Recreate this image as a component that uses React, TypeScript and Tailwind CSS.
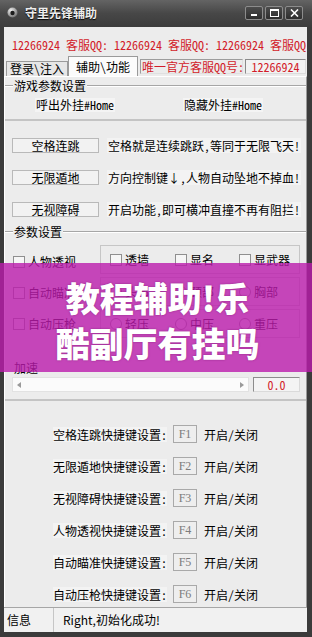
import React from "react"

function GroupHeader({ title }: { title: string }) {
  return (
    <div className="flex items-center h-[12px]">
      <div className="w-[8px] h-[2px] border-t border-[#a6a6a6] border-b border-b-white" />
      <span className="px-[1px] leading-[12px]">{title}</span>
      <div className="flex-1 h-[2px] border-t border-[#a6a6a6] border-b border-b-white" />
    </div>
  )
}

function Check({ label }: { label: string }) {
  return (
    <div className="flex items-center gap-[3px]">
      <span className="w-[12px] h-[12px] border border-[#8f8f8f] bg-[#f6f6f6]" />
      <span className="leading-[14px]">{label}</span>
    </div>
  )
}

function Radio({ label }: { label: string }) {
  return (
    <div className="flex items-center gap-[3px]">
      <span className="w-[12px] h-[12px] rounded-full border border-[#8f8f8f] bg-[#f6f6f6]" />
      <span className="leading-[14px]">{label}</span>
    </div>
  )
}

function FuncRow({ name, desc }: { name: string; desc: string }) {
  return (
    <div className="flex items-center h-[15px]">
      <div className="w-[87px] h-[15px] border border-[#b9b9b9] bg-[#f2f2f2] flex items-center justify-center leading-[13px]">
        {name}
      </div>
      <span className="ml-[8px] px-[1px] bg-[#f3f3f3] leading-[15px] whitespace-nowrap">{desc}</span>
    </div>
  )
}

function HotkeyRow({ name, k }: { name: string; k: string }) {
  return (
    <div className="flex items-center justify-center h-[18px]">
      <span className="w-[114px] whitespace-nowrap bg-[#f3f3f3] leading-[15px]">{name}快捷键设置:</span>
      <div className="ml-[6px] w-[24px] h-[18px] border border-[#a9a9a9] bg-[#eeeeee] flex items-center justify-center text-[#7c7c7c] font-['Liberation_Serif',serif] text-[12px]">
        {k}
      </div>
      <span className="ml-[7px] leading-[15px]">开启/关闭</span>
    </div>
  )
}

export default function App() {
  return (
    <div className="relative w-[312px] h-[637px] bg-[#3b3b3b] flex flex-col overflow-hidden text-[12px] text-black font-['Noto_Sans_Mono_CJK_SC','Noto_Sans_CJK_SC',sans-serif]">
      {/* Title bar */}
      <div className="h-[27px] shrink-0 flex items-start bg-linear-to-b from-[#646464] via-[#474747] to-[#3c3c3c]">
        <svg className="ml-[7px] mt-[7px]" width="11" height="11" viewBox="0 0 11 11">
          <defs>
            <radialGradient id="ball" cx="0.35" cy="0.3" r="0.8">
              <stop offset="0" stopColor="#f0f0f0" />
              <stop offset="1" stopColor="#6a6a6a" />
            </radialGradient>
          </defs>
          <circle cx="5.5" cy="5.5" r="5" fill="url(#ball)" />
          <circle cx="5.5" cy="6" r="2.2" fill="#1c1c1c" />
        </svg>
        <span className="ml-[7px] mt-[6px] text-[12px] leading-[14px] font-bold text-[#ededed] [text-shadow:0_1px_1px_#000] font-['Noto_Sans_CJK_SC',sans-serif]">
          守里先锋辅助
        </span>
        <div className="ml-auto mr-[9px] mt-[6px] flex gap-[2px]">
          <div className="w-[18px] h-[14px] border border-[#8c8c8c] rounded-[2px] bg-linear-to-b from-[#4c4c4c] to-[#2e2e2e] flex items-end justify-center pb-[3px]">
            <div className="w-[6px] h-[2px] bg-white" />
          </div>
          <div className="w-[18px] h-[14px] border border-[#8c8c8c] rounded-[2px] bg-linear-to-b from-[#4c4c4c] to-[#2e2e2e] flex items-center justify-center">
            <div className="w-[9px] h-[8px] border border-white border-t-2" />
          </div>
          <div className="w-[18px] h-[14px] border border-[#8c8c8c] rounded-[2px] bg-linear-to-b from-[#4c4c4c] to-[#2e2e2e] flex items-center justify-center">
            <svg width="9" height="8" viewBox="0 0 9 8">
              <path d="M1 0.5 L8 7.5 M8 0.5 L1 7.5" stroke="#fff" strokeWidth="1.6" />
            </svg>
          </div>
        </div>
      </div>

      {/* Client area */}
      <div className="flex-1 ml-[4px] mr-[5px] mb-[5px] bg-[#ececec] flex flex-col">
        {/* Marquee */}
        <div className="h-[29px] shrink-0 pt-[10px] pl-[8px] overflow-hidden whitespace-nowrap text-[#d21c2a] leading-[16px]">
          12266924 客服QQ: 12266924 客服QQ: 12266924 客服QQ
        </div>

        {/* Tabs row */}
        <div className="h-[20px] shrink-0 flex items-end">
          <div className="ml-[2px] w-[62px] h-[15px] border border-b-0 border-[#9a9a9a] bg-[#e6e6e6] flex items-center justify-center leading-[14px]">
            登录\注入
          </div>
          <div className="w-[70px] h-[20px] border border-b-0 border-[#9a9a9a] bg-[#fbfbfb] flex items-center justify-center leading-[14px]">
            辅助\功能
          </div>
          <div className="self-start mt-[3px] ml-[2px] w-[103px] h-[15px] border border-[#9c9c9c] border-r-[#e0e0e0] border-b-[#e0e0e0] flex items-center pl-[1px] text-[#d21c2a] leading-[14px] whitespace-nowrap">
            唯一官方客服QQ号:
          </div>
          <div className="self-start mt-[3px] ml-[2px] w-[61px] h-[15px] border border-[#8a8a8a] border-r-[#dcdcdc] border-b-[#dcdcdc] bg-[#f2f2f2] flex items-center justify-center text-[#d21c2a] leading-[14px]">
            12266924
          </div>
        </div>

        {/* Tab panel */}
        <div className="flex-1 flex flex-col border-t border-l border-white border-r border-r-[#9a9a9a]">
          {/* 游戏参数设置 */}
          <div className="h-[44px] shrink-0 pt-[3px] flex flex-col border-b-2 border-b-[#c4c4c4]">
            <GroupHeader title="游戏参数设置" />
            <div className="mt-[6px] flex h-[14px] leading-[14px]">
              <span className="ml-[30px] px-[1px] bg-[#f4f4f4]">呼出外挂#Home</span>
              <span className="ml-[68px] px-[1px] bg-[#f4f4f4]">隐藏外挂#Home</span>
            </div>
          </div>

          {/* Function buttons */}
          <div className="h-[105px] shrink-0 pt-[17px] pl-[7px] flex flex-col gap-[17px]">
            <FuncRow name="空格连跳" desc="空格就是连续跳跃,等同于无限飞天!" />
            <FuncRow name="无限遁地" desc="方向控制键↓,人物自动坠地不掉血!" />
            <FuncRow name="无视障碍" desc="开启功能,即可横冲直撞不再有阻拦!" />
          </div>

          {/* 参数设置 */}
          <div className="h-[175px] shrink-0 flex flex-col border-b-2 border-b-[#c4c4c4]">
            <GroupHeader title="参数设置" />
            <div className="mt-[7px] flex flex-col gap-[3px]">
              <div className="flex items-center h-[29px]">
                <div className="w-[95px] pl-[8px] pt-[4px]">
                  <Check label="人物透视" />
                </div>
                <div className="w-[200px] h-[29px] border border-[#c6c6c6] flex items-center pl-[9px]">
                  <div className="w-[65px]"><Check label="透墙" /></div>
                  <div className="w-[64px]"><Check label="显名" /></div>
                  <div><Check label="显武器" /></div>
                </div>
              </div>
              <div className="flex items-center h-[29px]">
                <div className="w-[95px] pl-[8px] pt-[2px]">
                  <Check label="自动瞄准" />
                </div>
                <div className="w-[200px] h-[29px] border border-[#c6c6c6] flex items-center pl-[9px]">
                  <div className="w-[65px]"><Radio label="头部" /></div>
                  <div className="w-[64px]"><Radio label="颈部" /></div>
                  <div><Radio label="胸部" /></div>
                </div>
              </div>
              <div className="flex items-center h-[29px]">
                <div className="w-[95px] pl-[8px]">
                  <Check label="自动压枪" />
                </div>
                <div className="w-[200px] h-[29px] border border-[#c6c6c6] flex items-center pl-[9px]">
                  <div className="w-[65px]"><Radio label="轻压" /></div>
                  <div className="w-[64px]"><Radio label="中压" /></div>
                  <div><Radio label="重压" /></div>
                </div>
              </div>
            </div>
            <div className="mt-[24px] pl-[9px] h-[12px] leading-[12px]">加速</div>
            <div className="mt-[3px] flex items-center h-[15px]">
              <div className="ml-[7px] w-[237px] h-[15px] bg-[#fbfbfb] border border-[#e2e2e2] flex items-center justify-between px-[4px]">
                <svg width="4" height="6" viewBox="0 0 4 6"><path d="M4 0 L0 3 L4 6 Z" fill="#9a9a9a" /></svg>
                <svg width="4" height="6" viewBox="0 0 4 6"><path d="M0 0 L4 3 L0 6 Z" fill="#9a9a9a" /></svg>
              </div>
              <div className="ml-[4px] w-[47px] h-[15px] border border-[#8c8c8c] border-r-[#dadada] border-b-[#dadada] bg-[#f4f4f4] flex items-center justify-center text-[#d21c2a] leading-[13px]">
                0.0
              </div>
            </div>
          </div>

          {/* Hotkeys */}
          <div className="flex-1 pt-[24px] flex flex-col gap-[14px]">
            <HotkeyRow name="空格连跳" k="F1" />
            <HotkeyRow name="无限遁地" k="F2" />
            <HotkeyRow name="无视障碍" k="F3" />
            <HotkeyRow name="人物透视" k="F4" />
            <HotkeyRow name="自动瞄准" k="F5" />
            <HotkeyRow name="自动压枪" k="F6" />
          </div>
        </div>

        {/* Status bar */}
        <div className="h-[25px] shrink-0 flex items-stretch border-t border-[#a6a6a6] bg-[#f1f1f1]">
          <span className="w-[49px] pl-[3px] flex items-center">信息</span>
          <div className="w-[1px] bg-[#c6c6c6]" />
          <span className="pl-[9px] flex items-center font-['Noto_Sans_CJK_SC',sans-serif]">Right,初始化成功!</span>
        </div>
      </div>

      {/* Promo overlay */}
      <div className="absolute left-0 top-[263px] w-full h-[109px] bg-[rgba(188,28,172,0.8)] flex flex-col items-center justify-center pt-[4px] pl-[3px] text-white font-black text-[34px] leading-[45px] font-['Noto_Sans_CJK_SC',sans-serif] [text-shadow:0_0_2px_rgba(90,0,80,0.5)]">
        <span>教程辅助!乐</span>
        <span>酷副厅有挂吗</span>
      </div>
    </div>
  )
}
